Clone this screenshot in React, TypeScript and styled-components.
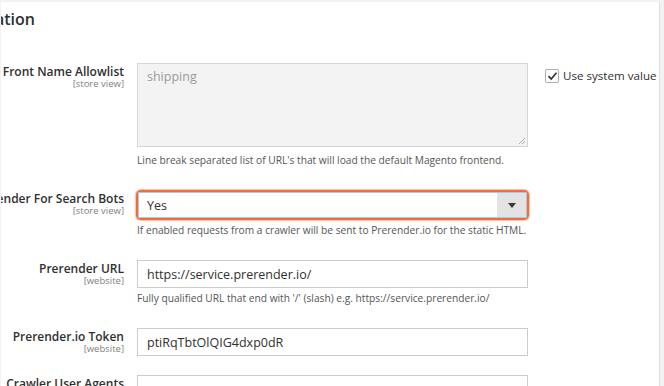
import React from "react";
import styled, { createGlobalStyle } from "styled-components";

const Global = createGlobalStyle`
  html, body { margin: 0; padding: 0; background: #f2f2f2; overflow: hidden; }
  body { font-family: "Open Sans", "Noto Sans", sans-serif; color: #303030; }
  * { box-sizing: border-box; }
`;

const Panel = styled.div`
  margin: 2px 4px 0 1px;
  height: 384px;
  background: #ffffff;
  border-right: 1px solid #e0e0e0;
  overflow: hidden;
`;

const Title = styled.h2`
  margin: 0 0 0 -6px;
  padding: 7px 0 0 0;
  height: 61px;
  font-size: 16px;
  font-weight: 600;
  color: #303030;
  line-height: 20px;
  white-space: nowrap;
`;

const Row = styled.div<{ $gap: number }>`
  display: grid;
  grid-template-columns: 123px 391px auto;
  column-gap: 13px;
  margin-bottom: ${(p) => p.$gap}px;
`;

const LabelCell = styled.div`
  text-align: right;
  white-space: nowrap;
  padding-top: 2px;
  display: flex;
  flex-direction: column;
  align-items: flex-end;
`;

const LabelText = styled.span`
  font-size: 12px;
  font-weight: 600;
  color: #303030;
  line-height: 13px;
`;

const Scope = styled.span`
  font-size: 9.5px;
  color: #808080;
  line-height: 10px;
  margin-top: 1px;
`;

const Control = styled.div`
  display: flex;
  flex-direction: column;
`;

const TextArea = styled.div`
  height: 84px;
  background: #f3f3f3;
  border: 1px solid #d6d6d6;
  padding: 4px 9px;
  font-size: 12.5px;
  color: #9a9a9a;
  position: relative;
`;

const Grip = styled.svg`
  position: absolute;
  right: 1px;
  bottom: 1px;
`;

const Note = styled.div<{ $mt: number }>`
  margin-top: ${(p) => p.$mt}px;
  font-size: 10.2px;
  line-height: 13px;
  color: #555555;
  white-space: nowrap;
`;

const Input = styled.div`
  height: 28px;
  border: 1px solid #cccccc;
  background: #fff;
  padding: 0 9px;
  display: flex;
  align-items: center;
  font-size: 12.5px;
  color: #303030;
`;

const SelectWrap = styled.div`
  margin: 0 -1px;
  padding: 2px;
  border-radius: 5px;
  background: #f26c3a;
  box-shadow: 0 0 1px 1px rgba(242, 108, 58, 0.45);
`;

const Select = styled.div`
  height: 26px;
  border: 1px solid #a9c9ea;
  background: #fff;
  display: flex;
  align-items: stretch;
`;

const SelectValue = styled.div`
  flex: 1;
  display: flex;
  align-items: center;
  padding: 0 8px;
  font-size: 12.5px;
  color: #303030;
`;

const SelectArrow = styled.div`
  width: 29px;
  background: #e3e3e3;
  display: flex;
  align-items: center;
  justify-content: center;
`;

const Triangle = styled.span`
  width: 0;
  height: 0;
  border-left: 4px solid transparent;
  border-right: 4px solid transparent;
  border-top: 5px solid #41362f;
`;

const SysCell = styled.label`
  display: flex;
  align-items: center;
  gap: 4px;
  margin-left: 4px;
  padding-top: 5px;
  align-self: start;
  font-size: 11.6px;
  color: #303030;
  white-space: nowrap;
`;

const Box = styled.span`
  width: 14px;
  height: 14px;
  border: 1px solid #adadad;
  border-radius: 2px;
  background: #fff;
  display: flex;
  align-items: center;
  justify-content: center;
`;

export default function App() {
  return (
    <>
      <Global />
      <Panel>
        <Title>ation</Title>
        <Row $gap={23}>
          <LabelCell>
            <LabelText>Front Name Allowlist</LabelText>
            <Scope>[store view]</Scope>
          </LabelCell>
          <Control>
            <TextArea>
              shipping
              <Grip width="9" height="9" viewBox="0 0 9 9">
                <path d="M8 2 L2 8 M8 5 L5 8" stroke="#9a9a9a" strokeWidth="0.8" />
              </Grip>
            </TextArea>
            <Note $mt={7}>Line break separated list of URL's that will load the default Magento frontend.</Note>
          </Control>
          <SysCell>
            <Box>
              <svg width="11" height="10" viewBox="0 0 11 10">
                <path d="M1.5 5.2 L4.2 8 L9.5 1.8" fill="none" stroke="#303030" strokeWidth="1.7" />
              </svg>
            </Box>
            Use system value
          </SysCell>
        </Row>
        <Row $gap={23}>
          <LabelCell>
            <LabelText>Prerender For Search Bots</LabelText>
            <Scope>[store view]</Scope>
          </LabelCell>
          <Control>
            <SelectWrap>
              <Select>
                <SelectValue>Yes</SelectValue>
                <SelectArrow>
                  <Triangle />
                </SelectArrow>
              </Select>
            </SelectWrap>
            <Note $mt={4}>If enabled requests from a crawler will be sent to Prerender.io for the static HTML.</Note>
          </Control>
        </Row>
        <Row $gap={23}>
          <LabelCell>
            <LabelText>Prerender URL</LabelText>
            <Scope>[website]</Scope>
          </LabelCell>
          <Control>
            <Input>https://service.prerender.io/</Input>
            <Note $mt={4}>Fully qualified URL that end with '/' (slash) e.g. https://service.prerender.io/</Note>
          </Control>
        </Row>
        <Row $gap={19}>
          <LabelCell>
            <LabelText>Prerender.io Token</LabelText>
            <Scope>[website]</Scope>
          </LabelCell>
          <Control>
            <Input>ptiRqTbtOlQIG4dxp0dR</Input>
          </Control>
        </Row>
        <Row $gap={0}>
          <LabelCell>
            <LabelText>Crawler User Agents</LabelText>
          </LabelCell>
          <Control>
            <Input />
          </Control>
        </Row>
      </Panel>
    </>
  );
}
